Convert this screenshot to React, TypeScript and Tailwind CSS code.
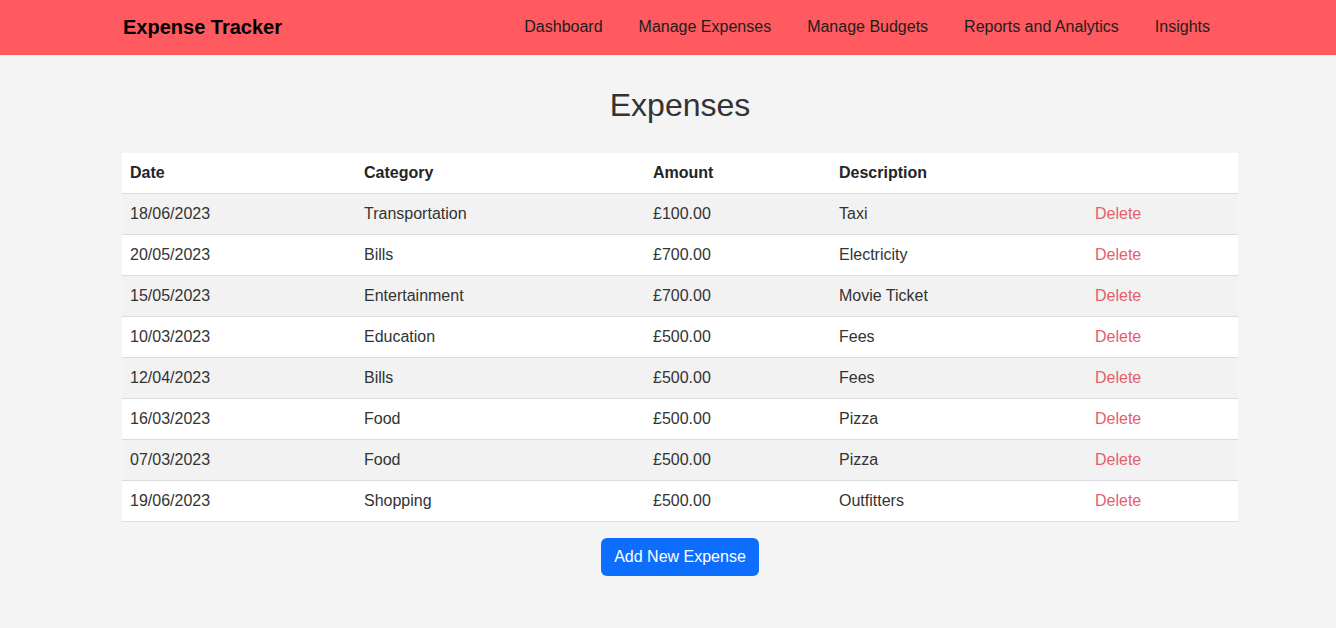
import React from 'react';

const expenses = [
  { date: '18/06/2023', category: 'Transportation', amount: '£100.00', description: 'Taxi' },
  { date: '20/05/2023', category: 'Bills', amount: '£700.00', description: 'Electricity' },
  { date: '15/05/2023', category: 'Entertainment', amount: '£700.00', description: 'Movie Ticket' },
  { date: '10/03/2023', category: 'Education', amount: '£500.00', description: 'Fees' },
  { date: '12/04/2023', category: 'Bills', amount: '£500.00', description: 'Fees' },
  { date: '16/03/2023', category: 'Food', amount: '£500.00', description: 'Pizza' },
  { date: '07/03/2023', category: 'Food', amount: '£500.00', description: 'Pizza' },
  { date: '19/06/2023', category: 'Shopping', amount: '£500.00', description: 'Outfitters' },
];

const links = ['Dashboard', 'Manage Expenses', 'Manage Budgets', 'Reports and Analytics', 'Insights'];

export default function App() {
  return (
    <div className="min-h-[628px] bg-[#f4f4f4] text-[16px] leading-6" style={{ fontFamily: '"Liberation Sans", Arial, sans-serif' }}>
      {/* navbar */}
      <nav className="h-[55px] bg-[#ff5a5f] flex items-center pb-[2px]">
        <div className="ml-[123px] w-[1087px] flex items-center">
          <span className="text-[20px] font-bold text-black">Expense Tracker</span>
          <ul className="ml-auto flex items-center gap-[36px]">
            {links.map((l) => (
              <li key={l} className="text-[#1d1d1d]">{l}</li>
            ))}
          </ul>
        </div>
      </nav>

      {/* content */}
      <main className="ml-[122px] w-[1116px] flex flex-col items-center">
        <h1 className="mt-[32px] mb-[30px] text-[32px] leading-9 text-[#333]">Expenses</h1>

        <table className="w-full border-collapse text-left text-[#333]">
          <thead>
            <tr className="bg-white border-b border-[#dddddd]">
              <th className="w-[234px] px-2 py-2 font-bold text-[#212529]">Date</th>
              <th className="w-[289px] px-2 py-2 font-bold text-[#212529]">Category</th>
              <th className="w-[186px] px-2 py-2 font-bold text-[#212529]">Amount</th>
              <th className="w-[256px] px-2 py-2 font-bold text-[#212529]">Description</th>
              <th className="px-2 py-2"></th>
            </tr>
          </thead>
          <tbody>
            {expenses.map((e, i) => (
              <tr key={i} className={`border-b border-[#dddddd] ${i % 2 === 0 ? 'bg-[#f2f2f2]' : 'bg-white'}`}>
                <td className="px-2 py-2">{e.date}</td>
                <td className="px-2 py-2">{e.category}</td>
                <td className="px-2 py-2">{e.amount}</td>
                <td className="px-2 py-2">{e.description}</td>
                <td className="px-2 py-2 text-[#e4606d]">Delete</td>
              </tr>
            ))}
          </tbody>
        </table>

        <button className="mt-[16px] h-[38px] px-[13px] rounded-[6px] bg-[#0d6efd] text-white text-[16px]">
          Add New Expense
        </button>
      </main>
    </div>
  );
}
